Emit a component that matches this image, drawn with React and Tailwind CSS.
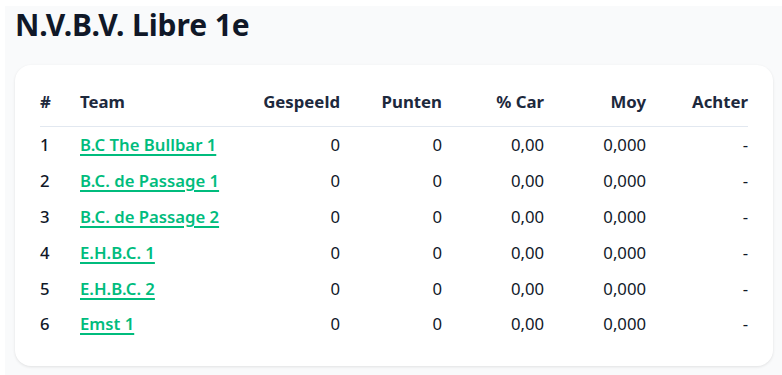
const teams = [
  { pos: 1, name: 'B.C The Bullbar 1' },
  { pos: 2, name: 'B.C. de Passage 1' },
  { pos: 3, name: 'B.C. de Passage 2' },
  { pos: 4, name: 'E.H.B.C. 1' },
  { pos: 5, name: 'E.H.B.C. 2' },
  { pos: 6, name: 'Emst 1' }
];

const cols = 'grid grid-cols-[40px_1fr_repeat(5,102px)] items-center';

export default function App() {
  return (
    <div className="bg-white pt-[6px] pl-[5px] min-h-screen" style={{ fontFamily: '"Noto Sans", "Open Sans", sans-serif' }}>
      <div className="bg-gray-50 min-h-[369px] pl-[10px] pr-[9px] pt-[1px] pb-4">
        <h1 className="text-[30px] leading-9 font-bold text-gray-900 tracking-[-0.1px]">N.V.B.V. Libre 1e</h1>

        <div className="mt-[22px] bg-white rounded-2xl shadow-[0_1px_3px_rgba(0,0,0,0.1)] pt-6 pb-6 px-[25px]">
          {/* kop */}
          <div className={`${cols} pt-[1px] pb-3 border-b border-slate-200 text-[16.8px] leading-6 font-bold text-slate-800`}>
            <div>#</div>
            <div>Team</div>
            <div className="text-right">Gespeeld</div>
            <div className="text-right">Punten</div>
            <div className="text-right">% Car</div>
            <div className="text-right">Moy</div>
            <div className="text-right">Achter</div>
          </div>

          {/* rijen */}
          {teams.map(t => (
            <div key={t.pos} className={`${cols} h-[35.8px] text-[16.7px] text-gray-900`}>
              <div className="font-medium">{t.pos}</div>
              <div>
                <a href="#" className="text-emerald-500 font-semibold underline decoration-2 underline-offset-[3px]">{t.name}</a>
              </div>
              <div className="text-right">0</div>
              <div className="text-right">0</div>
              <div className="text-right">0,00</div>
              <div className="text-right">0,000</div>
              <div className="text-right">-</div>
            </div>
          ))}
        </div>
      </div>
    </div>
  );
}
